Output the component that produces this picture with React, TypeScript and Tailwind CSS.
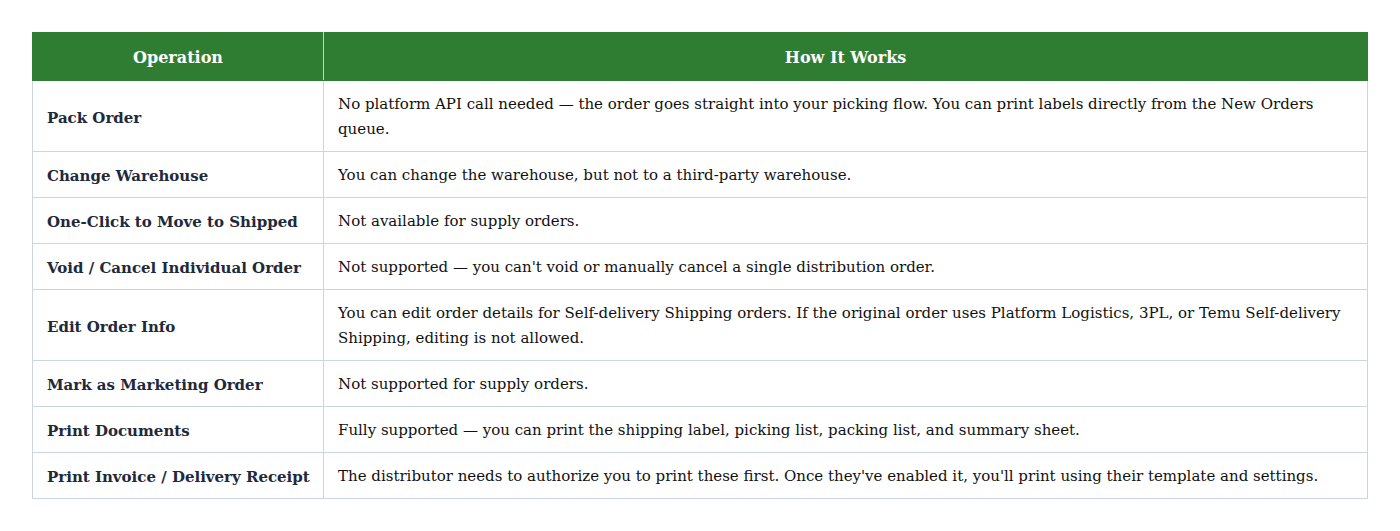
const ROWS: { op: string; how: string }[] = [
  {
    op: 'Pack Order',
    how: 'No platform API call needed — the order goes straight into your picking flow. You can print labels directly from the New Orders queue.',
  },
  { op: 'Change Warehouse', how: 'You can change the warehouse, but not to a third-party warehouse.' },
  { op: 'One-Click to Move to Shipped', how: 'Not available for supply orders.' },
  { op: 'Void / Cancel Individual Order', how: "Not supported — you can't void or manually cancel a single distribution order." },
  {
    op: 'Edit Order Info',
    how: 'You can edit order details for Self-delivery Shipping orders. If the original order uses Platform Logistics, 3PL, or Temu Self-delivery Shipping, editing is not allowed.',
  },
  { op: 'Mark as Marketing Order', how: 'Not supported for supply orders.' },
  { op: 'Print Documents', how: 'Fully supported — you can print the shipping label, picking list, packing list, and summary sheet.' },
  {
    op: 'Print Invoice / Delivery Receipt',
    how: "The distributor needs to authorize you to print these first. Once they've enabled it, you'll print using their template and settings.",
  },
]

export default function App() {
  return (
    <div className="bg-white p-8 font-['DejaVu_Serif',serif]">
      <table className="w-full table-fixed border-collapse text-[15px] leading-[25px]">
        <colgroup>
          <col className="w-[291px]" />
          <col />
        </colgroup>
        <thead>
          <tr className="bg-[#2e7d32] text-[16px] text-white">
            <th className="border border-[#2e7d32] border-r-[#c8d3c9] px-[14px] pt-[12px] pb-[10px] font-bold">
              Operation
            </th>
            <th className="border border-[#2e7d32] px-[14px] pt-[12px] pb-[10px] font-bold">How It Works</th>
          </tr>
        </thead>
        <tbody>
          {ROWS.map((r) => (
            <tr key={r.op}>
              <td className="whitespace-nowrap border border-[#cbd5e1] px-[14px] pt-[12px] pb-[8px] font-bold text-[#1e293b]">
                {r.op}
              </td>
              <td className="border border-[#cbd5e1] px-[14px] pt-[11px] pb-[9px] text-[#111111]">{r.how}</td>
            </tr>
          ))}
        </tbody>
      </table>
    </div>
  )
}
